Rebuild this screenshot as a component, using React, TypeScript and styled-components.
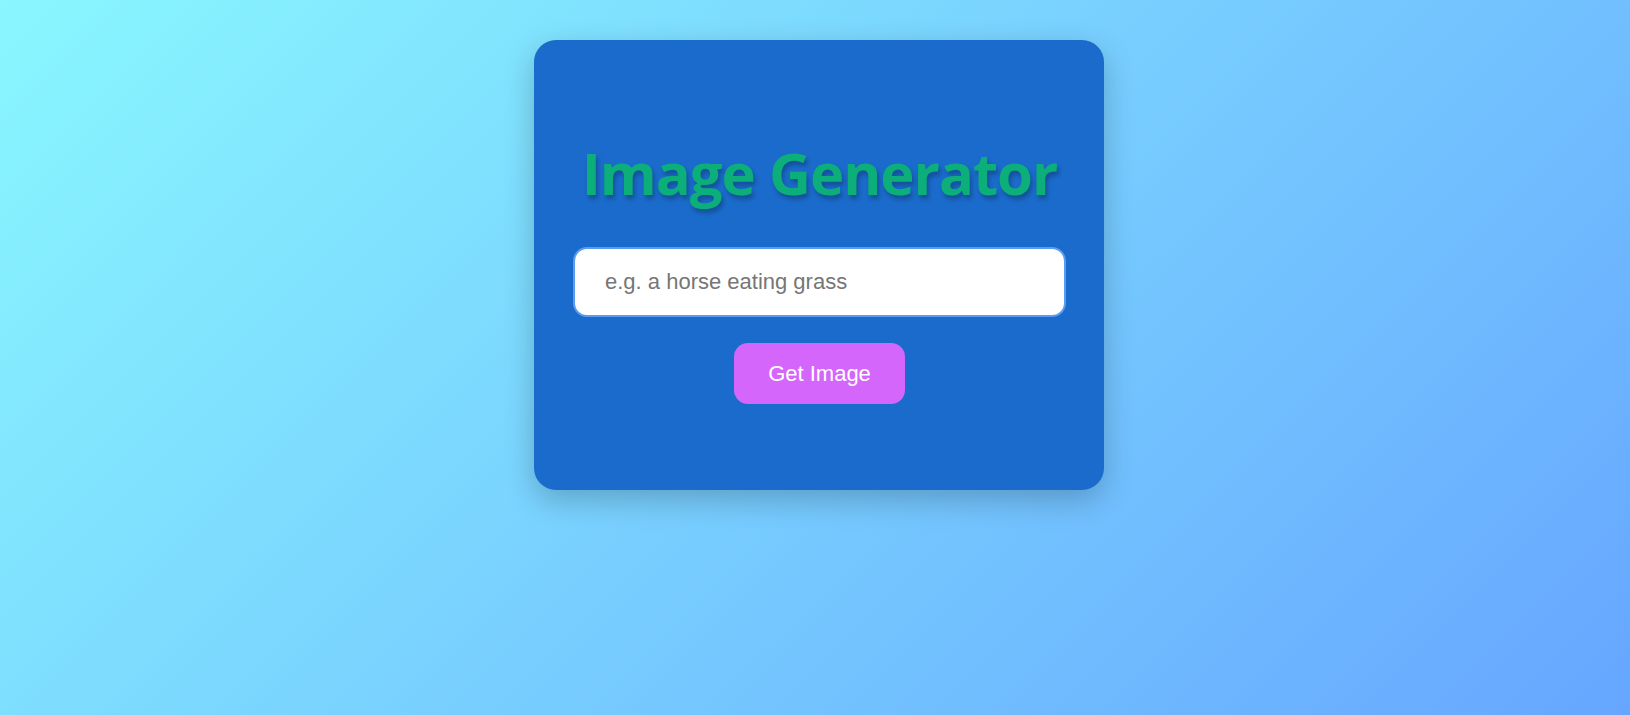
import React, { useState } from 'react'
import styled, { createGlobalStyle } from 'styled-components'

const GlobalStyle = createGlobalStyle`
  html, body {
    margin: 0;
    padding: 0;
  }
  body {
    min-height: 100vh;
    background: linear-gradient(135deg, #89f7fe 0%, #66a6ff 100%);
    font-family: "Liberation Sans", Arial, sans-serif;
  }
`

const Page = styled.div`
  min-height: 100vh;
  display: flex;
  justify-content: center;
  align-items: flex-start;
  padding: 40px 0 0 8px;
  box-sizing: border-box;
`

const Card = styled.div`
  width: 570px;
  height: 450px;
  box-sizing: border-box;
  background: #1a6bcb;
  border-radius: 22px;
  box-shadow: 0 10px 30px rgba(0, 0, 0, 0.22);
  display: flex;
  flex-direction: column;
  align-items: center;
  padding: 93px 38px 0 39px;
`

const Title = styled.h1`
  margin: 0;
  font-family: "Open Sans", "Noto Sans", sans-serif;
  font-weight: 700;
  font-size: 58px;
  line-height: 80px;
  letter-spacing: -1px;
  color: #0caf7a;
  text-shadow: 2px 4px 4px rgba(0, 0, 0, 0.25);
`

const Form = styled.form`
  width: 100%;
  display: flex;
  flex-direction: column;
  align-items: center;
  gap: 26px;
  margin-top: 34px;
`

const PromptInput = styled.input`
  width: 100%;
  height: 70px;
  box-sizing: border-box;
  border: 2px solid #5b9cf2;
  border-radius: 14px;
  padding: 0 30px;
  font-family: "Liberation Sans", Arial, sans-serif;
  font-size: 22px;
  color: #333;
  background: #fff;
  outline: none;

  &::placeholder {
    color: #767676;
  }
`

const SubmitButton = styled.button`
  height: 61px;
  padding: 0 34px;
  border: none;
  border-radius: 14px;
  background: #d466fb;
  color: #fff;
  font-family: "Liberation Sans", Arial, sans-serif;
  font-size: 22px;
  cursor: pointer;
`

export default function App(): React.ReactElement {
  const [prompt, setPrompt] = useState('')

  const handleSubmit = (e: React.FormEvent) => {
    e.preventDefault()
  }

  return (
    <>
      <GlobalStyle />
      <Page>
        <Card>
          <Title>Image Generator</Title>
          <Form onSubmit={handleSubmit}>
            <PromptInput
              type="text"
              placeholder="e.g. a horse eating grass"
              value={prompt}
              onChange={(e) => setPrompt(e.target.value)}
            />
            <SubmitButton type="submit">Get Image</SubmitButton>
          </Form>
        </Card>
      </Page>
    </>
  )
}
